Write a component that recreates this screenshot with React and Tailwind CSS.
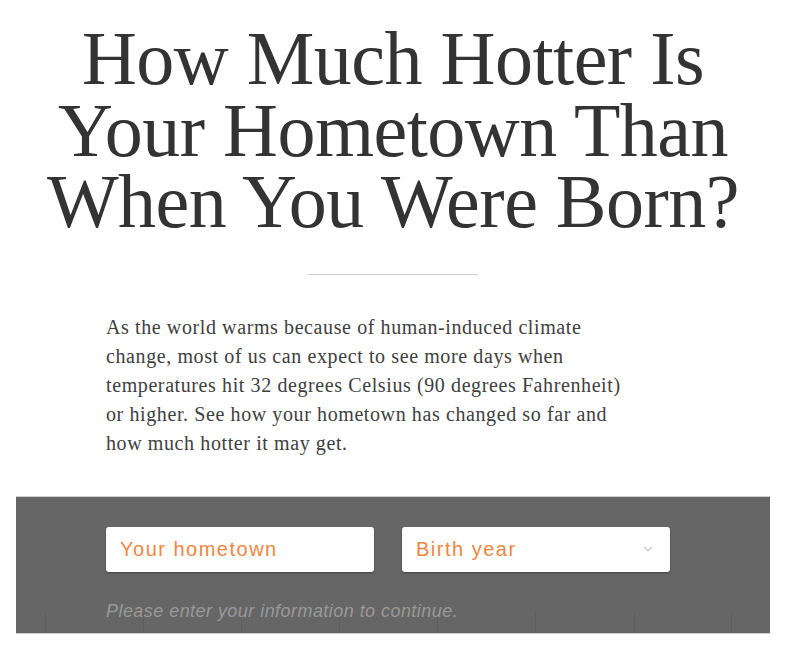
import React from 'react';

const ticks = [45, 143, 241, 339, 437, 535, 634, 731];

const ChevronDown = () => (
  <svg width="10" height="6" viewBox="0 0 10 6" fill="none" stroke="#c4c4c4" strokeWidth="1.2">
    <path d="M1 1l4 4 4-4" />
  </svg>
);

const App = () => {
  return (
    <div className="w-[786px] bg-white min-h-[648px] overflow-hidden">
      <h1
        className="pt-[23px] text-center text-[76px] leading-[71.5px] tracking-[-0.5px] text-[#333333]"
        style={{ fontFamily: '"Liberation Serif", "Times New Roman", serif' }}
      >
        How Much Hotter Is
        <br />
        Your Hometown Than
        <br />
        When You Were Born?
      </h1>

      <div className="mx-auto mt-[36px] h-px w-[170px] bg-[#d0d0d0]" />

      <p
        className="ml-[106px] mt-[38px] w-[528px] text-[20px] leading-[29px] tracking-[0.6px] text-[#404040]"
        style={{ fontFamily: '"Liberation Serif", Georgia, serif' }}
      >
        As the world warms because of human-induced climate change, most of us can expect to see more days
        when temperatures hit 32 degrees Celsius (90 degrees Fahrenheit) or higher. See how your hometown has
        changed so far and how much hotter it may get.
      </p>

      <div className="relative mx-4 mt-[38px] h-[138px] border-t border-b border-[#cfcfcf] bg-[#666666] overflow-hidden">
        {ticks.map((x) => (
          <div
            key={x}
            className="absolute bottom-0 h-[20px] w-px bg-[#5e5e5e]"
            style={{ left: x - 16 }}
          />
        ))}
        <div
          className="relative flex gap-[28px] pl-[90px] pt-[30px]"
          style={{ fontFamily: '"Liberation Sans", Arial, sans-serif' }}
        >
          <div className="flex h-[45px] w-[268px] items-center rounded-[3px] bg-white px-[14px] shadow-[0_1px_2px_rgba(0,0,0,0.35)]">
            <span className="text-[20px] tracking-[1.5px] text-[#ef8640]">Your hometown</span>
          </div>
          <div className="flex h-[45px] w-[268px] items-center justify-between rounded-[3px] bg-white pl-[14px] pr-[17px] shadow-[0_1px_2px_rgba(0,0,0,0.35)]">
            <span className="text-[20px] tracking-[1.5px] text-[#ef8640]">Birth year</span>
            <ChevronDown />
          </div>
        </div>
        <p
          className="relative ml-[90px] mt-[26px] text-[18px] italic tracking-[0.45px] text-[#999999]"
          style={{ fontFamily: '"Liberation Sans", Arial, sans-serif' }}
        >
          Please enter your information to continue.
        </p>
      </div>
    </div>
  );
};

export default App;
